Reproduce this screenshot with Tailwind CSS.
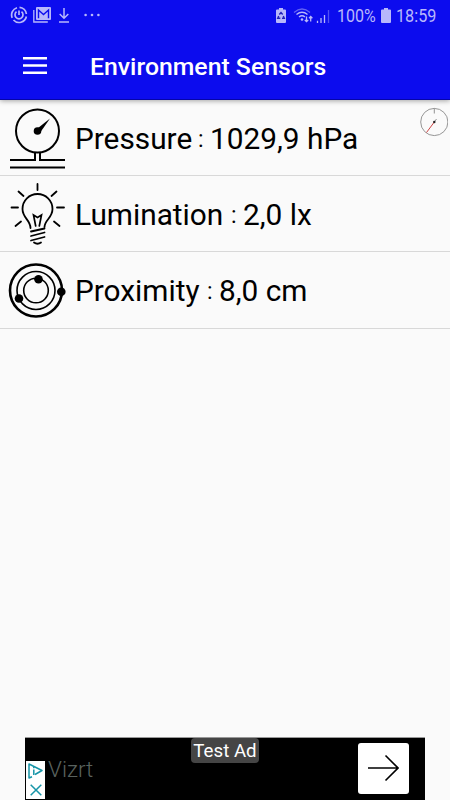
<!DOCTYPE html>
<html lang="en">
<head>
  <meta charset="UTF-8">
  <meta name="viewport" content="width=device-width, initial-scale=1.0">
  <title>Environment Sensors</title>
  <script src="https://cdn.jsdelivr.net/npm/@tailwindcss/browser@4"></script>
</head>
<body class="bg-[#fafafa] font-['Roboto',sans-serif] text-black">
  <div class="relative flex flex-col w-[450px] h-[800px] overflow-hidden">

    <!-- Header -->
    <header class="h-[100px] shrink-0 bg-[#0c0cee] border-b border-[#0505a8] shadow-[0_1px_5px_rgba(0,0,0,0.35)] z-10">
      <div class="flex items-center justify-between h-8 pl-[10px] pr-[13px] text-[#b8b8fb]">
        <div class="flex items-center">
          <svg class="w-[18px] h-[18px] -mt-[2px]" viewBox="0 0 18 18" fill="none" stroke="currentColor" stroke-width="1.7">
            <path d="M9.500 1.300A7.500 7.500 0 0 1 16.400 8M16.400 10.500A7.500 7.500 0 0 1 3.500 14M2.200 11.800A7.500 7.500 0 0 1 7 1.700"/>
            <path d="M11.500 5.700A4 4 0 1 1 6.500 5.700M9 4.500v4.500"/>
          </svg>
          <svg class="w-[18px] h-4 ml-[5px] -mt-[2px]" viewBox="0 0 18 16">
            <path fill="none" stroke="currentColor" stroke-width="1.3" d="M.8 3v12h14"/>
            <rect x="3" y="0" width="15" height="13" rx="1" fill="currentColor"/>
            <path fill="none" stroke="#0c0cee" stroke-width="1.400" d="M5.500 11.200V3l5 4.500 5-4.500v8.200"/>
          </svg>
          <svg class="w-[10px] h-[15px] ml-2 -mt-[2px]" viewBox="0 0 10 15" fill="none" stroke="currentColor" stroke-width="1.5">
            <path d="M5 0v10M.7 6L5 10.300 9.300 6M0 14h10"/>
          </svg>
          <svg class="w-4 h-1 ml-[15px] -mt-[2px]" viewBox="0 0 16 4" fill="currentColor">
            <circle cx="1.600" cy="2" r="1.300"/><circle cx="8" cy="2" r="1.300"/><circle cx="14.400" cy="2" r="1.300"/>
          </svg>
        </div>
        <div class="flex items-center">
          <svg class="w-[10px] h-[15px] -mt-px" viewBox="0 0 10 15">
            <path fill="currentColor" d="M3 0h4v1.500h2q1 0 1 1V14q0 1-1 1H1q-1 0-1-1V2.500q0-1 1-1h2z"/>
            <path fill="none" stroke="#2020b8" stroke-width="1.400" d="M3.300 6.500L5 4.500l1.700 2M7.300 8l1 2.300H6M4.300 10.300H1.700l1-2.300"/>
          </svg>
          <svg class="w-5 h-[15px] ml-[7px] -mt-px" viewBox="0 0 20 15" fill="none" stroke="currentColor" stroke-width="1.300">
            <path opacity=".5" d="M1 4.500Q9-2.500 17 4.500"/>
            <path d="M3.500 6.500Q9 2 14.500 6.500M6 9Q9 6.500 12 9"/>
            <circle cx="9" cy="11.500" r="1.300" fill="currentColor" stroke="none"/>
            <path d="M13.500 8.500v5M11.800 12l1.700 1.700 1.700-1.700M17.700 13.500v-5M16 10.200l1.700-1.700 1.700 1.700"/>
          </svg>
          <svg class="w-[14px] h-[14px] ml-[3px] -mt-px" viewBox="0 0 14 14" stroke="currentColor" stroke-width="1.300">
            <path d="M1.500 11.800V14M5 9v5M8.500 6v8"/>
            <path opacity=".4" d="M12.500 1v13"/>
          </svg>
          <span class="w-[39px] ml-[7px] text-lg leading-8 whitespace-nowrap"><span class="inline-block origin-left scale-x-[0.89]">100%</span></span>
          <svg class="w-[10px] h-[15px] ml-[5px] -mt-[2px]" viewBox="0 0 10 15" fill="currentColor">
            <path d="M3 0h4v1.500h2q1 0 1 1V14q0 1-1 1H1q-1 0-1-1V2.500q0-1 1-1h2z"/>
          </svg>
          <span class="w-[41px] ml-[5px] text-lg leading-8 whitespace-nowrap"><span class="inline-block origin-left scale-x-[0.9]">18:59</span></span>
        </div>
      </div>
      <div class="flex items-center h-[67px] pl-[23px] text-white">
        <svg class="w-6 h-[17px] -mt-px" viewBox="0 0 24 17" fill="currentColor">
          <path d="M0 0h24v2.600H0zM0 7.200h24v2.600H0zM0 14.400h24V17H0z"/>
        </svg>
        <h1 class="ml-[43px] pt-[2px] text-[24.800px] leading-8 font-medium whitespace-nowrap">Environment Sensors</h1>
      </div>
    </header>

    <!-- Sensor list -->
    <main class="flex-1 text-[29.800px] leading-9">
      <div class="flex items-center h-[76px] border-b border-[#d8d8d8]">
        <svg class="w-[75px] h-[76px] shrink-0" viewBox="0 0 75 76" fill="none" stroke="#000" stroke-width="2">
          <circle cx="37.500" cy="31" r="21.500"/>
          <path d="M10 60h25v-7M65 60H40v-7M10 67.500h55"/>
          <circle cx="37.500" cy="31" r="3.800" fill="#000" stroke="none"/>
          <path d="M35.500 30L50 18.500 39.500 33.500z" fill="#000" stroke="none"/>
        </svg>
        <span class="w-[123px] pt-[2px] whitespace-nowrap">Pressure</span>
        <span class="w-[12px] pt-[4px] text-[23px]">:</span>
        <span class="pt-[2px] whitespace-nowrap">1029,9 hPa</span>
      </div>
      <div class="flex items-center h-[76px] border-b border-[#d8d8d8]">
        <svg class="w-[75px] h-[76px] shrink-0" viewBox="0 0 75 76" fill="none" stroke="#000" stroke-width="1.800" stroke-linecap="round">
          <path d="M30.500 52C30.500 44 22.500 42 22.500 33a15 15 0 0 1 30 0C52.500 42 44.500 44 44.500 51"/>
          <path d="M37.500 8v6M18.500 15.500l5 4.500M56.500 15.500l-5 4.500M11.500 31.500h6.500M57 31.500h7M21 45.500l-5.500 4.500M54 45.500l5.500 4.500"/>
          <path d="M35.700 50l-2.200-11 4 2.500 4-2.500L39.300 50" stroke-width="1.700"/>
          <path d="M31 55.500l13.500-3M31 60l13.500-3.500M31 64.500l13.500-3.500M34 66.500q3.500 2.500 7 0"/>
        </svg>
        <span class="w-[156px] pt-[2px] whitespace-nowrap">Lumination</span>
        <span class="w-[12px] pt-[4px] text-[23px]">:</span>
        <span class="pt-[2px] whitespace-nowrap">2,0 lx</span>
      </div>
      <div class="flex items-center h-[77px] border-b border-[#d8d8d8]">
        <svg class="w-[75px] h-[76px] shrink-0" viewBox="0 0 75 76" fill="none" stroke="#000">
          <circle cx="36" cy="38.500" r="26" stroke-width="2.600"/>
          <circle cx="36" cy="38.500" r="19" stroke-width="1.600"/>
          <circle cx="36" cy="38.500" r="12.300" stroke-width="1.600"/>
          <g fill="#000" stroke="none">
            <circle cx="38.500" cy="27.300" r="4.300"/>
            <circle cx="19" cy="46.500" r="4.300"/>
            <circle cx="61.300" cy="39.700" r="4.300"/>
          </g>
        </svg>
        <span class="w-[132px] pt-[2px] whitespace-nowrap">Proximity</span>
        <span class="w-[12px] pt-[4px] text-[23px]">:</span>
        <span class="pt-[2px] whitespace-nowrap">8,0 cm</span>
      </div>
    </main>

    <!-- Compass -->
    <svg class="absolute left-[420px] top-[107px] w-7 h-[30px]" viewBox="0 0 28 30" fill="none">
      <circle cx="14.300" cy="15" r="13.600" stroke="#8a8a8a" stroke-width=".9"/>
      <path d="M14.300 1.500v5" stroke="#777" stroke-width=".8"/>
      <path d="M14.300 15L6.500 25.500" stroke="#c44" stroke-width="1"/>
      <path d="M14.300 15l2.200-3" stroke="#777" stroke-width=".8"/>
      <circle cx="14.300" cy="15" r="1.200" fill="#222"/>
    </svg>

    <!-- Ad banner -->
    <footer class="relative flex items-end justify-between h-[63px] mx-[25px] shrink-0 bg-black border-t border-[#999]">
      <div class="flex items-end">
        <div class="flex flex-col items-center justify-between w-[19px] h-[38px] ml-px mb-px bg-white py-[2px]">
          <svg class="w-[15px] h-[16px]" viewBox="0 0 15 16" fill="none" stroke="#1795a8" stroke-width="1.500" stroke-linejoin="round">
            <path d="M4 13.800l-3 1.200V1l13 6.500-7 4"/>
            <path d="M5.800 6.500v5.500M5.800 3.900v1.400"/>
          </svg>
          <svg class="w-3 h-3 mb-px" viewBox="0 0 12 12" stroke="#1795a8" stroke-width="1.500">
            <path d="M.7.7l10.600 10.600M11.300.7L.7 11.300"/>
          </svg>
        </div>
        <span class="ml-[3px] mb-[17px] text-[22.500px] leading-7 font-light text-[#59625e]">Vizrt</span>
      </div>
      <div class="flex items-center justify-center w-[51px] h-[51px] mr-4 mb-[6px] bg-white rounded-[3px]">
        <svg class="w-8 h-[28px] -ml-[2px] -mt-px" viewBox="0 0 32 28" fill="none" stroke="#000" stroke-width="1.600">
          <path d="M1 14h30M18.500 1.500L31 14 18.500 26.500"/>
        </svg>
      </div>
      <div class="absolute left-[166px] top-0 w-[68px] h-[25px] bg-[#454545] rounded-[4px] text-white text-[18.700px] leading-[26px] text-center whitespace-nowrap">Test Ad</div>
    </footer>
  </div>
</body>
</html>
